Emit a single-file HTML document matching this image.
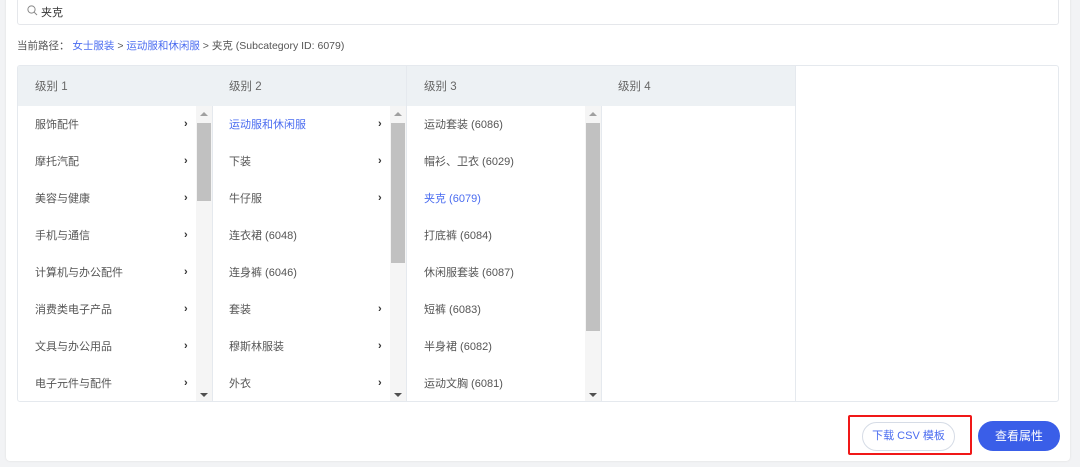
<!DOCTYPE html>
<html><head><meta charset="utf-8"><style>
*{box-sizing:border-box;margin:0;padding:0}
body{width:1080px;height:467px;background:#f2f3f5;font-family:"Liberation Sans","Noto Sans CJK SC",sans-serif;font-size:11px;color:#555;position:relative;overflow:hidden}
.card{position:absolute;left:6px;top:-5px;width:1064px;height:466px;background:#fff;border-radius:4px;box-shadow:0 0 2px #ddd}
.search{position:absolute;left:17px;top:-2px;width:1042px;height:27px;border:1px solid #e5e7eb;border-radius:3px;background:#fff}
.search span{position:absolute;left:23px;top:5px;color:#333}
.path{position:absolute;left:17px;top:38px;color:#555;font-size:10.5px}
.path a{color:#4a6cf0;text-decoration:none}
.tbl{position:absolute;left:17px;top:65px;width:1042px;height:337px;border:1px solid #e5e9ee;border-radius:3px;overflow:hidden}
.col{position:absolute;top:0;height:337px;border-right:1px solid #e5e9ee;width:195px}
.hd{height:40px;background:#edf1f4;padding:12px 0 0 17px;color:#666;font-size:11.5px}
.row{position:absolute;left:17px;height:14px;color:#555;margin-top:-2px}
.row.on{color:#4a6cf0}
.arr{position:absolute;left:166px;font-weight:bold;color:#333;font-size:11px;margin-top:1px}
.sb{position:absolute;right:0;top:40px;width:16px;height:297px;background:#f5f5f5}
.th{position:absolute;left:1px;width:14px;background:#c1c1c1}
.up,.dn{position:absolute;left:4px;width:0;height:0;border-left:4px solid transparent;border-right:4px solid transparent}
.up{top:6px;border-bottom:4px solid #a0a0a0}
.dn{bottom:6px;border-top:4px solid #505050}
.btn1{position:absolute;left:862px;top:422px;width:93px;height:29px;border:1px solid #d6dce6;border-radius:15px;color:#4a6cf0;text-align:center;line-height:27px;background:#fff}
.red{position:absolute;left:848px;top:415px;width:124px;height:40px;border:2px solid #f01818;border-radius:2px}
.btn2{position:absolute;left:978px;top:421px;width:82px;height:30px;border-radius:15px;background:#3a5ee8;color:#fff;text-align:center;line-height:30px;font-size:12px}
</style></head><body>
<div class="card"></div>
<div class="search"><svg style="position:absolute;left:9px;top:6px" width="11" height="11" viewBox="0 0 11 11"><circle cx="4.5" cy="4.5" r="3.6" fill="none" stroke="#888" stroke-width="1"/><path d="M7.2 7.2L10 10" stroke="#888"/></svg><span>夹克</span></div>
<div class="path">当前路径： <a>女士服装</a> &gt; <a>运动服和休闲服</a> &gt; 夹克 (Subcategory ID: 6079)</div>
<div class="tbl">
<div class="col" style="left:0"><div class="hd">级别 1</div>
<div class="row" style="top:52px">服饰配件</div><div class="arr" style="top:51px">›</div>
<div class="row" style="top:89px">摩托汽配</div><div class="arr" style="top:88px">›</div>
<div class="row" style="top:126px">美容与健康</div><div class="arr" style="top:125px">›</div>
<div class="row" style="top:163px">手机与通信</div><div class="arr" style="top:162px">›</div>
<div class="row" style="top:200px">计算机与办公配件</div><div class="arr" style="top:199px">›</div>
<div class="row" style="top:237px">消费类电子产品</div><div class="arr" style="top:236px">›</div>
<div class="row" style="top:274px">文具与办公用品</div><div class="arr" style="top:273px">›</div>
<div class="row" style="top:311px">电子元件与配件</div><div class="arr" style="top:310px">›</div>
<div class="sb"><div class="up"></div><div class="th" style="top:17px;height:78px"></div><div class="dn"></div></div></div>
<div class="col" style="left:194px"><div class="hd">级别 2</div>
<div class="row on" style="top:52px">运动服和休闲服</div><div class="arr" style="top:51px">›</div>
<div class="row" style="top:89px">下装</div><div class="arr" style="top:88px">›</div>
<div class="row" style="top:126px">牛仔服</div><div class="arr" style="top:125px">›</div>
<div class="row" style="top:163px">连衣裙 (6048)</div>
<div class="row" style="top:200px">连身裤 (6046)</div>
<div class="row" style="top:237px">套装</div><div class="arr" style="top:236px">›</div>
<div class="row" style="top:274px">穆斯林服装</div><div class="arr" style="top:273px">›</div>
<div class="row" style="top:311px">外衣</div><div class="arr" style="top:310px">›</div>
<div class="sb"><div class="up"></div><div class="th" style="top:17px;height:140px"></div><div class="dn"></div></div></div>
<div class="col" style="left:389px"><div class="hd">级别 3</div>
<div class="row" style="top:52px">运动套装 (6086)</div>
<div class="row" style="top:89px">帽衫、卫衣 (6029)</div>
<div class="row on" style="top:126px">夹克 (6079)</div>
<div class="row" style="top:163px">打底裤 (6084)</div>
<div class="row" style="top:200px">休闲服套装 (6087)</div>
<div class="row" style="top:237px">短裤 (6083)</div>
<div class="row" style="top:274px">半身裙 (6082)</div>
<div class="row" style="top:311px">运动文胸 (6081)</div>
<div class="sb"><div class="up"></div><div class="th" style="top:17px;height:208px"></div><div class="dn"></div></div></div>
<div class="col" style="left:583px"><div class="hd">级别 4</div></div>
</div>
<div class="btn1">下载 CSV 模板</div>
<div class="red"></div>
<div class="btn2">查看属性</div>
</body></html>
